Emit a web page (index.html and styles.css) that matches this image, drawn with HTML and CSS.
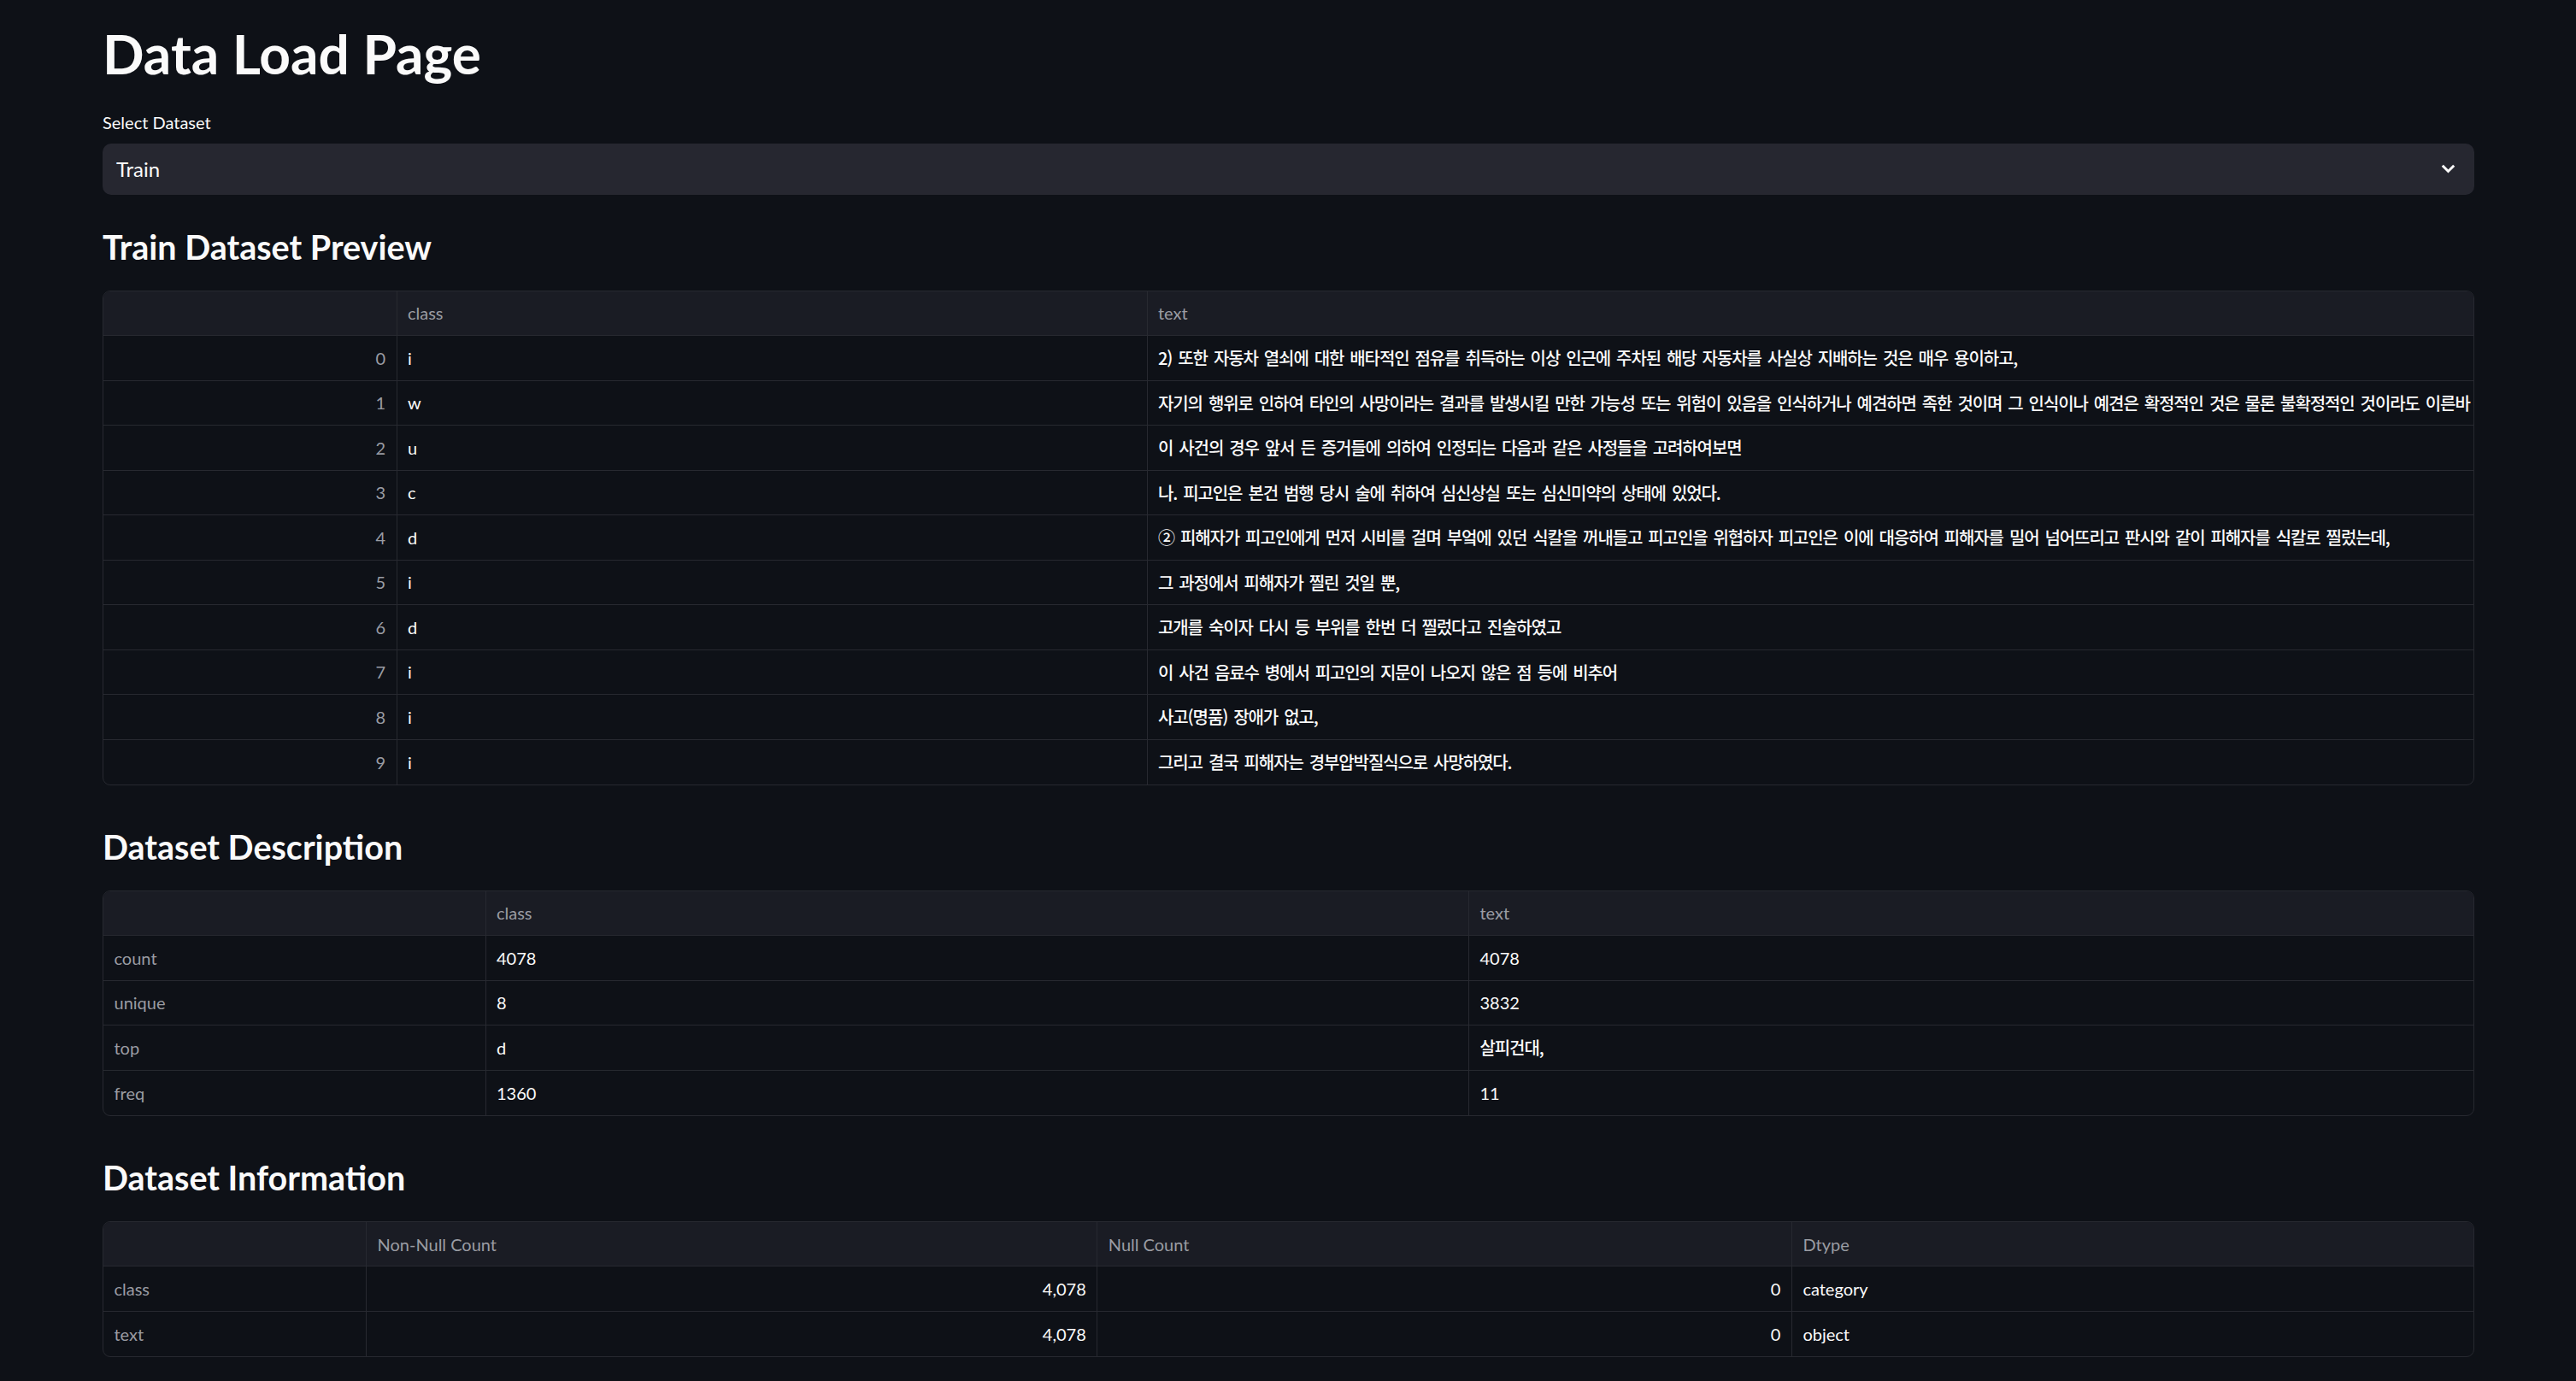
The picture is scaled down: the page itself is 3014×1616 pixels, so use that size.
FILE: index.html
```html
<!DOCTYPE html>
<html lang="ko">
<head>
<meta charset="utf-8">
<title>Data Load Page</title>
<link rel="stylesheet" href="styles.css">
</head>
<body>
<main class="page">
  <h1 class="title">Data Load Page</h1>

  <div class="field">
    <label class="field-label">Select Dataset</label>
    <div class="select">
      <span class="select-value">Train</span>
      <svg class="chevron" width="17" height="11" viewBox="0 0 17 11" aria-hidden="true"><path d="M1.8 1.8 L8.5 8.5 L15.2 1.8" fill="none" stroke="#fafafa" stroke-width="3"/></svg>
    </div>
  </div>

  <section class="section">
    <h3 class="heading">Train Dataset Preview</h3>
    <div class="table preview">
      <div class="row head"><div class="cell"></div><div class="cell">class</div><div class="cell">text</div></div>
      <div class="row"><div class="cell idx num">0</div><div class="cell">i</div><div class="cell ko">2) 또한 자동차 열쇠에 대한 배타적인 점유를 취득하는 이상 인근에 주차된 해당 자동차를 사실상 지배하는 것은 매우 용이하고,</div></div>
      <div class="row"><div class="cell idx num">1</div><div class="cell">w</div><div class="cell ko">자기의 행위로 인하여 타인의 사망이라는 결과를 발생시킬 만한 가능성 또는 위험이 있음을 인식하거나 예견하면 족한 것이며 그 인식이나 예견은 확정적인 것은 물론 불확정적인 것이라도 이른바 미필적 고의로 인정되는 것이다.</div></div>
      <div class="row"><div class="cell idx num">2</div><div class="cell">u</div><div class="cell ko">이 사건의 경우 앞서 든 증거들에 의하여 인정되는 다음과 같은 사정들을 고려하여보면</div></div>
      <div class="row"><div class="cell idx num">3</div><div class="cell">c</div><div class="cell ko">나. 피고인은 본건 범행 당시 술에 취하여 심신상실 또는 심신미약의 상태에 있었다.</div></div>
      <div class="row"><div class="cell idx num">4</div><div class="cell">d</div><div class="cell ko">② 피해자가 피고인에게 먼저 시비를 걸며 부엌에 있던 식칼을 꺼내들고 피고인을 위협하자 피고인은 이에 대응하여 피해자를 밀어 넘어뜨리고 판시와 같이 피해자를 식칼로 찔렀는데,</div></div>
      <div class="row"><div class="cell idx num">5</div><div class="cell">i</div><div class="cell ko">그 과정에서 피해자가 찔린 것일 뿐,</div></div>
      <div class="row"><div class="cell idx num">6</div><div class="cell">d</div><div class="cell ko">고개를 숙이자 다시 등 부위를 한번 더 찔렀다고 진술하였고</div></div>
      <div class="row"><div class="cell idx num">7</div><div class="cell">i</div><div class="cell ko">이 사건 음료수 병에서 피고인의 지문이 나오지 않은 점 등에 비추어</div></div>
      <div class="row"><div class="cell idx num">8</div><div class="cell">i</div><div class="cell ko">사고(명품) 장애가 없고,</div></div>
      <div class="row"><div class="cell idx num">9</div><div class="cell">i</div><div class="cell ko">그리고 결국 피해자는 경부압박질식으로 사망하였다.</div></div>
    </div>
  </section>

  <section class="section">
    <h3 class="heading">Dataset Description</h3>
    <div class="table describe">
      <div class="row head"><div class="cell"></div><div class="cell">class</div><div class="cell">text</div></div>
      <div class="row"><div class="cell idx">count</div><div class="cell">4078</div><div class="cell">4078</div></div>
      <div class="row"><div class="cell idx">unique</div><div class="cell">8</div><div class="cell">3832</div></div>
      <div class="row"><div class="cell idx">top</div><div class="cell">d</div><div class="cell ko">살피건대,</div></div>
      <div class="row"><div class="cell idx">freq</div><div class="cell">1360</div><div class="cell">11</div></div>
    </div>
  </section>

  <section class="section">
    <h3 class="heading">Dataset Information</h3>
    <div class="table info">
      <div class="row head"><div class="cell"></div><div class="cell">Non-Null Count</div><div class="cell">Null Count</div><div class="cell">Dtype</div></div>
      <div class="row"><div class="cell idx">class</div><div class="cell num">4,078</div><div class="cell num">0</div><div class="cell">category</div></div>
      <div class="row"><div class="cell idx">text</div><div class="cell num">4,078</div><div class="cell num">0</div><div class="cell">object</div></div>
    </div>
  </section>
</main>
</body>
</html>
```

FILE: styles.css
```css
:root {
  --bg: #0e1117;
  --head: #1a1c24;
  --line: #272930;
  --text: #fafafa;
  --muted: #9a9ca3;
}

* { box-sizing: border-box; }

html, body {
  margin: 0;
  background: var(--bg);
}

body {
  font-family: "Lato", "Noto Sans CJK KR", sans-serif;
  color: var(--text);
}

.page {
  padding: 24.5px 119px 40px 120px;
}

.title {
  margin: 0;
  font-size: 64px;
  line-height: 75.6px;
  font-weight: 700;
  color: var(--text);
}

.field {
  margin-top: 31px;
}

.field-label {
  display: block;
  font-size: 20px;
  line-height: 25.2px;
  margin-bottom: 11.5px;
  color: var(--text);
}

.select {
  height: 60px;
  background: #262730;
  border-radius: 10px;
  display: flex;
  align-items: center;
  justify-content: space-between;
  padding: 0 22px 0 16px;
}

.select-value {
  font-size: 24px;
  color: var(--text);
}

.chevron { display: block; }

.section { margin-top: 50.6px; }
.field + .section { margin-top: 39.8px; }

.heading {
  margin: 0 0 30px;
  font-size: 39.5px;
  line-height: 42px;
  font-weight: 700;
  color: var(--text);
}

.table {
  border: 1px solid var(--line);
  border-radius: 9px;
  overflow: hidden;
}

.row {
  display: grid;
  height: 52.5px;
  border-bottom: 1px solid var(--line);
}

.row:last-child { border-bottom: none; }

.row.head { background: var(--head); }

.preview .row { grid-template-columns: 342.5px 878px 1fr; }
.describe .row { grid-template-columns: 446.5px 1150.5px 1fr; }
.info .row { grid-template-columns: 307px 855.3px 812.6px 1fr; }

.cell {
  display: flex;
  align-items: center;
  padding: 0 12.5px;
  font-size: 20px;
  white-space: nowrap;
  overflow: hidden;
  color: var(--text);
}

.cell + .cell { border-left: 1px solid var(--line); }

.head .cell { color: var(--muted); }
.cell.idx { color: var(--muted); }
.cell.num { justify-content: flex-end; }

.cell.ko {
  font-family: "Noto Sans CJK KR", "Lato", sans-serif;
  font-size: 20px;
  font-weight: 500;
  letter-spacing: -1.1px;
  word-spacing: 2.5px;
}
```
